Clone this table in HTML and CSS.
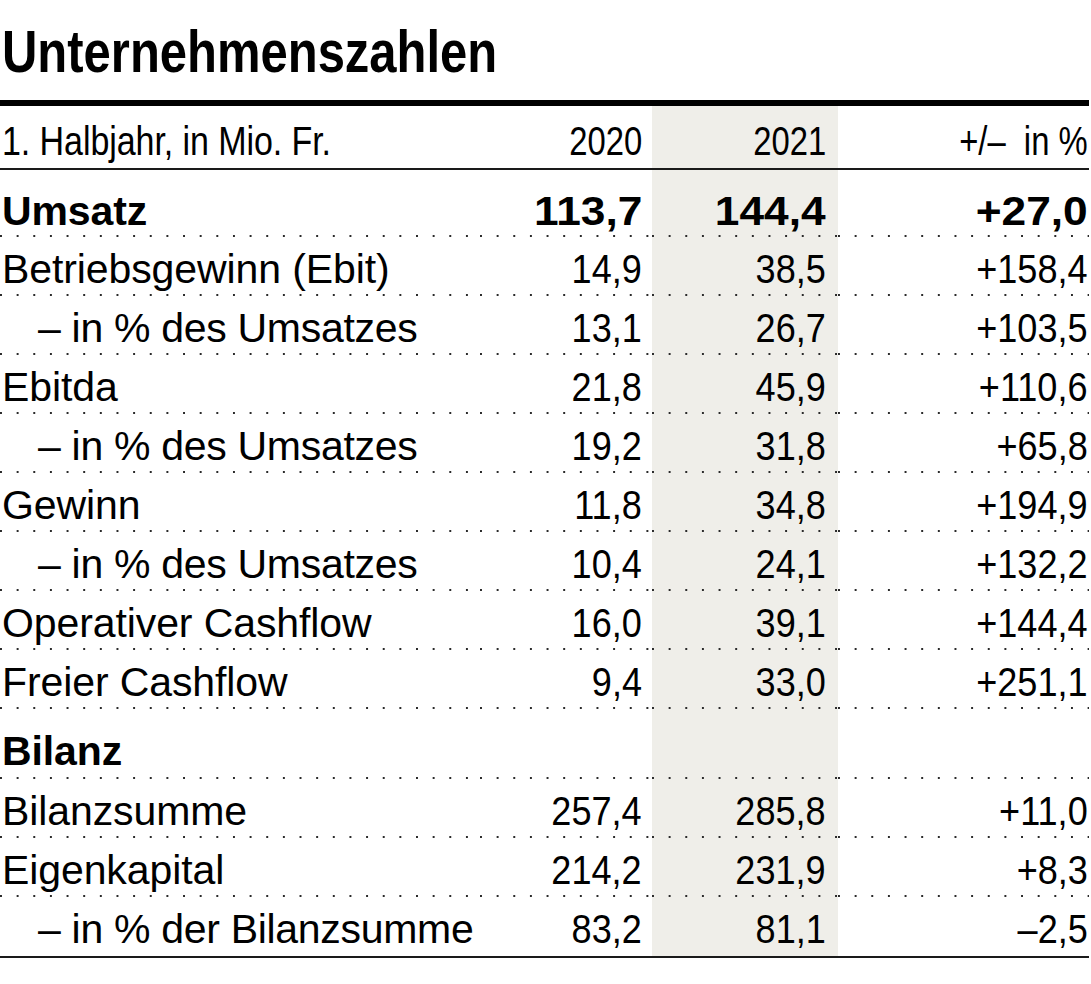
FILE: index.html
```html
<!DOCTYPE html>
<html lang="de">
<head>
<meta charset="utf-8">
<title>Unternehmenszahlen</title>
<link rel="stylesheet" href="styles.css">
</head>
<body>
<div class="page">
  <h1 class="title"><span class="narrow-l">Unternehmenszahlen</span></h1>
  <div class="table">
    <div class="row head">
      <div class="cell label"><span class="narrow-l">1. Halbjahr, in Mio. Fr.</span></div>
      <div class="cell num"><span class="n">2020</span></div>
      <div class="cell num hl"><span class="n">2021</span></div>
      <div class="cell num last-col"><span class="n">+/–&nbsp; in %</span></div>
    </div>
    <div class="row top bold">
      <div class="cell label">Umsatz</div>
      <div class="cell num"><span class="n">113,7</span></div>
      <div class="cell num hl"><span class="n">144,4</span></div>
      <div class="cell num last-col"><span class="n">+27,0</span></div>
    </div>
    <div class="row">
      <div class="cell label">Betriebsgewinn (Ebit)</div>
      <div class="cell num"><span class="n">14,9</span></div>
      <div class="cell num hl"><span class="n">38,5</span></div>
      <div class="cell num last-col"><span class="n">+158,4</span></div>
    </div>
    <div class="row">
      <div class="cell label sub">– in % des Umsatzes</div>
      <div class="cell num"><span class="n">13,1</span></div>
      <div class="cell num hl"><span class="n">26,7</span></div>
      <div class="cell num last-col"><span class="n">+103,5</span></div>
    </div>
    <div class="row">
      <div class="cell label">Ebitda</div>
      <div class="cell num"><span class="n">21,8</span></div>
      <div class="cell num hl"><span class="n">45,9</span></div>
      <div class="cell num last-col"><span class="n">+110,6</span></div>
    </div>
    <div class="row">
      <div class="cell label sub">– in % des Umsatzes</div>
      <div class="cell num"><span class="n">19,2</span></div>
      <div class="cell num hl"><span class="n">31,8</span></div>
      <div class="cell num last-col"><span class="n">+65,8</span></div>
    </div>
    <div class="row">
      <div class="cell label">Gewinn</div>
      <div class="cell num"><span class="n">11,8</span></div>
      <div class="cell num hl"><span class="n">34,8</span></div>
      <div class="cell num last-col"><span class="n">+194,9</span></div>
    </div>
    <div class="row">
      <div class="cell label sub">– in % des Umsatzes</div>
      <div class="cell num"><span class="n">10,4</span></div>
      <div class="cell num hl"><span class="n">24,1</span></div>
      <div class="cell num last-col"><span class="n">+132,2</span></div>
    </div>
    <div class="row">
      <div class="cell label">Operativer Cashflow</div>
      <div class="cell num"><span class="n">16,0</span></div>
      <div class="cell num hl"><span class="n">39,1</span></div>
      <div class="cell num last-col"><span class="n">+144,4</span></div>
    </div>
    <div class="row">
      <div class="cell label">Freier Cashflow</div>
      <div class="cell num"><span class="n">9,4</span></div>
      <div class="cell num hl"><span class="n">33,0</span></div>
      <div class="cell num last-col"><span class="n">+251,1</span></div>
    </div>
    <div class="row section bold">
      <div class="cell label">Bilanz</div>
      <div class="cell num"></div>
      <div class="cell num hl"></div>
      <div class="cell num last-col"></div>
    </div>
    <div class="row">
      <div class="cell label">Bilanzsumme</div>
      <div class="cell num"><span class="n">257,4</span></div>
      <div class="cell num hl"><span class="n">285,8</span></div>
      <div class="cell num last-col"><span class="n">+11,0</span></div>
    </div>
    <div class="row">
      <div class="cell label">Eigenkapital</div>
      <div class="cell num"><span class="n">214,2</span></div>
      <div class="cell num hl"><span class="n">231,9</span></div>
      <div class="cell num last-col"><span class="n">+8,3</span></div>
    </div>
    <div class="row end">
      <div class="cell label sub">– in % der Bilanzsumme</div>
      <div class="cell num"><span class="n">83,2</span></div>
      <div class="cell num hl"><span class="n">81,1</span></div>
      <div class="cell num last-col"><span class="n">–2,5</span></div>
    </div>
  </div>
</div>
</body>
</html>
```

FILE: styles.css
```css
html, body {
  margin: 0;
  padding: 0;
  background: #ffffff;
}

.page {
  width: 1089px;
  color: #000;
  font-family: "Liberation Sans", Arial, sans-serif;
}

.title {
  margin: 23px 0 18px 2px;
  font-weight: 700;
  font-size: 59px;
  line-height: 59px;
}

.narrow-l {
  display: inline-block;
  transform: scaleX(0.83);
  transform-origin: left bottom;
}

.table {
  border-top: 6px solid #000;
}

.row {
  display: grid;
  grid-template-columns: 480px 172px 186px 251px;
  height: 59px;
  box-sizing: border-box;
}

.cell {
  display: flex;
  align-items: flex-end;
  justify-content: flex-end;
  padding: 0 10px 6px 0;
  font-size: 41px;
  line-height: 41px;
  white-space: nowrap;
  background-image: linear-gradient(to right, #2a2a2a 0, #2a2a2a 2px, transparent 2px);
  background-size: 16.65px 2px;
  background-repeat: repeat-x;
  background-position: 0 100%;
}

.label {
  justify-content: flex-start;
  padding-left: 2px;
  letter-spacing: -0.1px;
}

.label.sub {
  padding-left: 38px;
  letter-spacing: -0.3px;
}

.n {
  display: inline-block;
  transform: scaleX(0.88);
  transform-origin: right bottom;
}

.head .n {
  transform: scaleX(0.8);
}

.bold .n {
  transform: scaleX(1.08);
}

.hl {
  background-color: #efeee9;
  padding-right: 12px;
}

.last-col {
  padding-right: 1px;
}

.bold .cell {
  font-weight: 700;
}

.head {
  height: 64px;
  border-bottom: 2px solid #1a1a1a;
}

.head .cell {
  background-image: none;
}

.top {
  height: 67px;
}

.top .cell {
  padding-bottom: 5px;
}

.section {
  height: 70px;
}

.section .cell {
  padding-bottom: 7px;
}

.end {
  height: 61px;
  border-bottom: 2px solid #1a1a1a;
}

.end .cell {
  background-image: none;
}
```
